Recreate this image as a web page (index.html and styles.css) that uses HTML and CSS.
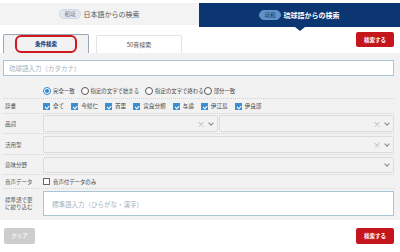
FILE: index.html
```html
<!DOCTYPE html>
<html lang="ja">

<head>
  <meta charset="UTF-8">
  <title>琉球語からの検索</title>
  <link rel="stylesheet" href="styles.css">
</head>

<body>

  <!-- 検索モード切替 -->
  <div class="mode-bar">
    <div class="mode mode-jp"><span class="pill">和琉</span>日本語からの検索</div>
    <div class="mode mode-ry active"><span class="pill">琉和</span>琉球語からの検索</div>
  </div>

  <!-- タブ -->
  <div class="tab-row">
    <div class="tab tab-on"><span class="mark">条件検索</span></div>
    <div class="tab">50音検索</div>
    <button class="btn btn-search btn-top">検索する</button>
  </div>

  <div class="panel">
    <input class="text-in" type="text" placeholder="琉球語入力（カタカナ）">

    <div class="row row-radio">
      <div class="label"></div>
      <div class="field opts">
        <span class="opt"><i class="radio on"></i>完全一致</span>
        <span class="opt"><i class="radio"></i>指定の文字で始まる</span>
        <span class="opt"><i class="radio"></i>指定の文字で終わる</span>
        <span class="opt opt-last"><i class="radio"></i>部分一致</span>
      </div>
    </div>

    <div class="row">
      <div class="label">辞書</div>
      <div class="field opts checks">
        <span class="opt"><i class="check on"></i>全て</span>
        <span class="opt"><i class="check on"></i>今帰仁</span>
        <span class="opt"><i class="check on"></i>首里</span>
        <span class="opt"><i class="check on"></i>宮良分類</span>
        <span class="opt"><i class="check on"></i>与論</span>
        <span class="opt"><i class="check on"></i>伊江島</span>
        <span class="opt"><i class="check on"></i>伊良部</span>
      </div>
    </div>

    <div class="row row-sel">
      <div class="label">品詞</div>
      <div class="field sel-pair">
        <div class="select"><span class="x">×</span><span class="chev"></span></div>
        <div class="select"><span class="x">×</span><span class="chev"></span></div>
      </div>
    </div>

    <div class="row row-sel row-sel2">
      <div class="label">活用型</div>
      <div class="field">
        <div class="select"><span class="x">×</span><span class="chev"></span></div>
      </div>
    </div>

    <div class="row row-sel row-sel3">
      <div class="label">意味分野</div>
      <div class="field">
        <div class="select select-s"><span class="chev"></span></div>
      </div>
    </div>

    <div class="row row-voice">
      <div class="label">音声データ</div>
      <div class="field opts">
        <span class="opt"><i class="check"></i>音声付データのみ</span>
      </div>
    </div>

    <div class="row row-last">
      <div class="label label-wrap">標準語で更に絞り込む</div>
      <div class="field">
        <input class="text-in text-tall" type="text" placeholder="標準語入力（ひらがな・漢字）">
      </div>
    </div>
  </div>

  <div class="footer">
    <button class="btn btn-clear">クリア</button>
    <button class="btn btn-search">検索する</button>
  </div>

</body>

</html>
```

FILE: styles.css
```css
body {
  margin: 0;
  width: 400px;
  font-family: "Noto Sans CJK JP", "Noto Sans", sans-serif;
  color: #555;
  background: #fff;
}

/* モード切替 */
.mode-bar {
  display: grid;
  grid-template-columns: 199px 201px;
  align-items: start;
  margin-top: 3px;
}

.mode {
  display: flex;
  justify-content: center;
  align-items: center;
  font-size: 7px;
  position: relative;
}

.mode-jp {
  height: 22px;
  background: #f3f3f3;
  color: #555;
}

.mode-ry {
  height: 24px;
  background: #0c3672;
  color: #fff;
  font-weight: bold;
}

.mode-ry::after {
  content: "";
  position: absolute;
  left: 50%;
  bottom: -4px;
  margin-left: -5px;
  border-left: 5px solid transparent;
  border-right: 5px solid transparent;
  border-top: 4px solid #0c3672;
}

.pill {
  display: inline-block;
  height: 8px;
  line-height: 8px;
  padding: 0 4px;
  margin-right: 3px;
  border-radius: 5px;
  font-size: 5.5px;
  font-weight: normal;
  background: #e1e7ee;
  color: #6b7a8c;
  border: 1px solid #d0d9e3;
}

.mode-ry .pill {
  background: #5e92c6;
  border-color: #5e92c6;
  color: #0c3672;
}

/* タブ */
.tab-row {
  display: flex;
  align-items: flex-end;
  height: 21px;
  margin-top: 5px;
  padding: 0 6px 0 3px;
}

.tab {
  width: 86px;
  height: 18px;
  box-sizing: border-box;
  display: flex;
  justify-content: center;
  align-items: center;
  font-size: 6px;
  color: #555;
  background: #fff;
  border: 1px solid #e4e4e4;
  border-bottom: none;
  border-radius: 2px 2px 0 0;
  margin-right: 7px;
}

.tab-on {
  height: 19px;
  background: #f2f2f2;
  border: 1px solid #9aa7b7;
  border-bottom: none;
  color: #0c3672;
  font-weight: bold;
  align-items: flex-end;
}

.mark {
  display: flex;
  justify-content: center;
  align-items: center;
  width: 58px;
  height: 14px;
  border: 2px solid #d0181f;
  border-radius: 6px;
  font-size: 5.5px;
}

.btn {
  border: none;
  border-radius: 2px;
  font-family: inherit;
  font-size: 5.5px;
  font-weight: bold;
  color: #fff;
  height: 16px;
  padding: 0;
  cursor: pointer;
}

.btn-search {
  width: 38px;
  background: #c4161c;
}

.btn-top {
  margin-left: auto;
  align-self: flex-start;
  height: 15px;
}

/* パネル */
.panel {
  background: #f2f2f2;
  padding: 7px 6px 2px 3px;
}

.text-in {
  display: block;
  width: 100%;
  height: 16px;
  box-sizing: border-box;
  border: 1px solid #a9c6d6;
  background: #fff;
  font-family: inherit;
  font-size: 6.5px;
  padding: 0 5px;
  outline: none;
}

.text-in::placeholder {
  color: #9fb3c2;
}

.text-tall {
  height: 25px;
  padding-left: 8px;
}

.row {
  display: grid;
  grid-template-columns: 40px 1fr;
  align-items: center;
  border-bottom: 1px dotted #d4d4d4;
  min-height: 14px;
}

.row-radio {
  margin-top: 8px;
}

.label {
  font-size: 5.5px;
  padding-left: 2px;
  color: #555;
}

.label-wrap {
  padding-right: 6px;
  line-height: 7px;
}

.opts {
  display: flex;
  flex-wrap: wrap;
  align-items: center;
  font-size: 5.4px;
  color: #444;
}

.opt {
  display: inline-flex;
  align-items: center;
  margin-right: 6px;
}

.checks {
  font-size: 5.6px;
}

.checks .opt {
  margin-right: 7px;
}

.opt-last {
  margin-left: -6px;
}

.radio {
  width: 6px;
  height: 6px;
  border: 1px solid #555;
  border-radius: 50%;
  margin-right: 2px;
  background: #fff;
  position: relative;
}

.radio.on {
  border-color: #2f89cf;
}

.radio.on::after {
  content: "";
  position: absolute;
  inset: 1px;
  border-radius: 50%;
  background: #2f89cf;
}

.check {
  width: 7px;
  height: 7px;
  box-sizing: border-box;
  border: 1px solid #666;
  background: #fff;
  margin-right: 3px;
  position: relative;
}

.check.on {
  background: #3a8fd2;
  border-color: #3a8fd2;
}

.check.on::after {
  content: "";
  position: absolute;
  left: 1px;
  top: 0;
  width: 3px;
  height: 1.5px;
  border-left: 1px solid #fff;
  border-bottom: 1px solid #fff;
  transform: translate(0, 1.5px) rotate(-45deg);
}

.row-sel {
  padding: 1px 0 1px;
}

.row-sel2 {
  padding-top: 2px;
}

.row-sel3 {
  padding: 2px 0 1px;
}

.sel-pair {
  display: grid;
  grid-template-columns: 1fr 1fr;
  gap: 1px;
}

.select {
  height: 17px;
  box-sizing: border-box;
  border: 1px solid #dcdcdc;
  border-radius: 2px;
  background: #f2f2f2;
  display: flex;
  justify-content: flex-end;
  align-items: center;
  padding-right: 4px;
}

.select-s {
  height: 16px;
}

.x {
  font-size: 8px;
  color: #b5b5b5;
  margin-right: 4px;
  line-height: 1;
}

.chev {
  width: 3px;
  height: 3px;
  border-right: 1px solid #888;
  border-bottom: 1px solid #888;
  transform: rotate(45deg);
  margin-top: -2px;
}

.row-voice {
  min-height: 13px;
}

.row-last {
  border-bottom: none;
  padding: 2px 0 2px;
}

/* フッター */
.footer {
  display: flex;
  justify-content: space-between;
  padding: 8px 6px 0 4px;
}

.btn-clear {
  width: 31px;
  background: #cdcdcd;
  color: #f4f4f4;
}
```
